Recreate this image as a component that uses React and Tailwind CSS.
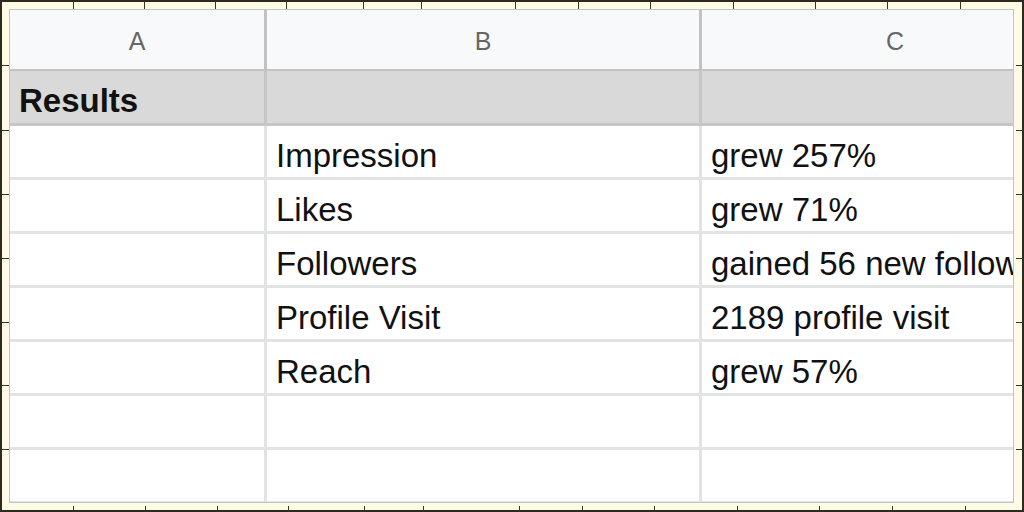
const topTicks = [71, 142, 213, 284, 361, 419, 513, 576, 648, 731, 813, 885, 958];
const bottomTicks = [71, 143, 215, 286, 362, 421, 517, 580, 652, 735, 817, 890, 963];
const sideTicks = [63, 128, 192, 256, 320, 383, 447];

const rows = [
  ["Impression", "grew 257%"],
  ["Likes", "grew 71%"],
  ["Followers", "gained 56 new followers"],
  ["Profile Visit", "2189 profile visit"],
  ["Reach", "grew 57%"],
  ["", ""],
  ["", ""],
];

function Ruler() {
  // ruler marks drawn over the cream frame
  return (
    <svg
      className="absolute inset-0 pointer-events-none"
      width="1024"
      height="512"
      viewBox="0 0 1024 512"
    >
      {topTicks.map((x) => (
        <line key={"t" + x} x1={x + 0.5} y1="0" x2={x + 0.5} y2="7" stroke="#3a3626" strokeWidth="1" />
      ))}
      {bottomTicks.map((x) => (
        <line key={"b" + x} x1={x + 0.5} y1="504" x2={x + 0.5} y2="512" stroke="#3a3626" strokeWidth="1" />
      ))}
      {sideTicks.map((y) => (
        <line key={"l" + y} x1="0" y1={y + 0.5} x2="9" y2={y + 0.5} stroke="#3a3626" strokeWidth="1" />
      ))}
      {sideTicks.map((y) => (
        <line key={"r" + y} x1="1014" y1={y + 0.5} x2="1024" y2={y + 0.5} stroke="#3a3626" strokeWidth="1" />
      ))}
    </svg>
  );
}

export default function App() {
  return (
    <div
      className="relative w-[1024px] h-[512px] bg-[#fdfae6] border-2 border-[#2e2b1e] pt-[7px] pl-[7px] pr-[8px] pb-[7px]"
      style={{ fontFamily: '"Liberation Sans", Arial, sans-serif' }}
    >
      <Ruler />
      <div className="relative w-full h-full overflow-hidden bg-white border border-[#c4c4c4]">
        <div className="grid grid-cols-[257px_435px_386px] w-[1078px]">
          {/* column header */}
          {["A", "B", "C"].map((l, i) => (
            <div
              key={l}
              className={
                "h-[61px] bg-[#f8f9fa] border-b-2 border-[#c2c2c2] flex justify-center pt-[19px] text-[25px] leading-none text-[#666666] " +
                (i < 2 ? "border-r-[3px]" : "")
              }
            >
              {l}
            </div>
          ))}

          {/* Results row */}
          <div className="h-[55px] bg-[#d9d9d9] border-b-[3px] border-r-[3px] border-[#c6c6c6] pt-[13px] pl-[9px] text-[33px] leading-none font-bold text-[#111111]">
            Results
          </div>
          <div className="h-[55px] bg-[#d9d9d9] border-b-[3px] border-r-[3px] border-[#c6c6c6]" />
          <div className="h-[55px] bg-[#d9d9d9] border-b-[3px] border-[#c6c6c6]" />

          {rows.map(([b, c], i) => (
            <div key={i} className="contents">
              <div className="h-[54px] border-b-[3px] border-r-[3px] border-[#e2e3e3]" />
              <div className="h-[54px] border-b-[3px] border-r-[3px] border-[#e2e3e3] pt-[13px] pl-[9px] text-[33px] leading-none text-[#111111] whitespace-nowrap">
                {b}
              </div>
              <div className="h-[54px] border-b-[3px] border-[#e2e3e3] pt-[13px] pl-[9px] text-[33px] leading-none text-[#111111] whitespace-nowrap overflow-hidden">
                {c}
              </div>
            </div>
          ))}
        </div>
      </div>
    </div>
  );
}
